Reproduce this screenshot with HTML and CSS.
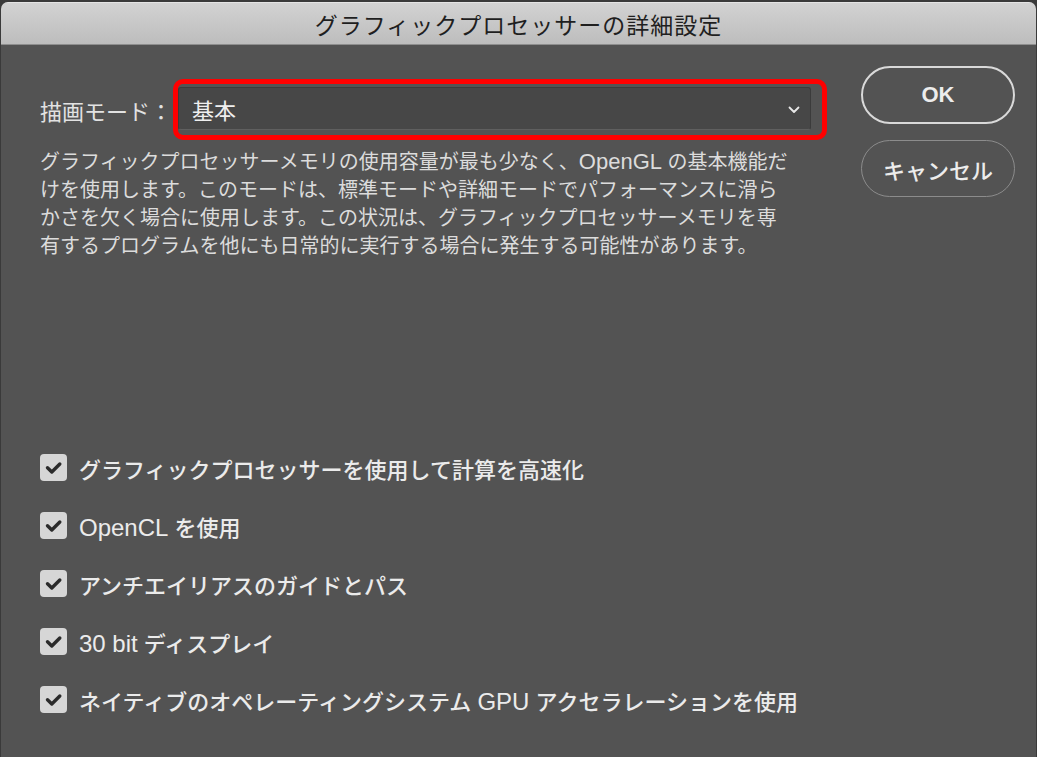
FILE: index.html
```html
<!DOCTYPE html>
<html lang="ja">
<head>
<meta charset="utf-8">
<title>グラフィックプロセッサーの詳細設定</title>
<link rel="stylesheet" href="styles.css">
</head>
<body>
<div class="window">
  <div class="titlebar">グラフィックプロセッサーの詳細設定</div>
  <div class="content">
    <div class="main">
      <div class="mode-row">
        <span class="mode-label">描画モード：</span>
        <div class="highlight">
          <div class="select">
            <span class="select-value">基本</span>
            <svg class="chevron" width="12" height="8" viewBox="0 0 12 8"><path d="M1.5 1.5 L6 6 L10.5 1.5" fill="none" stroke="#e8e8e8" stroke-width="1.8" stroke-linecap="round" stroke-linejoin="round"/></svg>
          </div>
        </div>
      </div>
      <p class="description">グラフィックプロセッサーメモリの使用容量が最も少なく、<span class="latin">OpenGL</span> の基本機能だ<br>けを使用します。このモードは、標準モードや詳細モードでパフォーマンスに滑ら<br>かさを欠く場合に使用します。この状況は、グラフィックプロセッサーメモリを専<br>有するプログラムを他にも日常的に実行する場合に発生する可能性があります。</p>
      <ul class="options">
        <li class="option"><span class="checkbox"><svg viewBox="0 0 27 27" width="27" height="27"><path d="M7.5 13.8 L11.8 18 L19.8 10" fill="none" stroke="#2b2b2b" stroke-width="3.4" stroke-linecap="round" stroke-linejoin="round"/></svg></span><span class="option-label">グラフィックプロセッサーを使用して計算を高速化</span></li>
        <li class="option"><span class="checkbox"><svg viewBox="0 0 27 27" width="27" height="27"><path d="M7.5 13.8 L11.8 18 L19.8 10" fill="none" stroke="#2b2b2b" stroke-width="3.4" stroke-linecap="round" stroke-linejoin="round"/></svg></span><span class="option-label"><span class="latin">OpenCL</span> を使用</span></li>
        <li class="option"><span class="checkbox"><svg viewBox="0 0 27 27" width="27" height="27"><path d="M7.5 13.8 L11.8 18 L19.8 10" fill="none" stroke="#2b2b2b" stroke-width="3.4" stroke-linecap="round" stroke-linejoin="round"/></svg></span><span class="option-label">アンチエイリアスのガイドとパス</span></li>
        <li class="option"><span class="checkbox"><svg viewBox="0 0 27 27" width="27" height="27"><path d="M7.5 13.8 L11.8 18 L19.8 10" fill="none" stroke="#2b2b2b" stroke-width="3.4" stroke-linecap="round" stroke-linejoin="round"/></svg></span><span class="option-label"><span class="latin">30 bit</span> ディスプレイ</span></li>
        <li class="option"><span class="checkbox"><svg viewBox="0 0 27 27" width="27" height="27"><path d="M7.5 13.8 L11.8 18 L19.8 10" fill="none" stroke="#2b2b2b" stroke-width="3.4" stroke-linecap="round" stroke-linejoin="round"/></svg></span><span class="option-label">ネイティブのオペレーティングシステム <span class="latin">GPU</span> アクセラレーションを使用</span></li>
      </ul>
    </div>
    <div class="buttons">
      <button class="btn btn-primary">OK</button>
      <button class="btn btn-secondary">キャンセル</button>
    </div>
  </div>
</div>
</body>
</html>
```
FILE: styles.css
```css
* { box-sizing: border-box; }
html, body { margin: 0; padding: 0; }
body {
  background: #3a3a3a;
  width: 1037px;
  height: 757px;
  overflow: hidden;
  font-family: "Liberation Sans", "Noto Sans CJK JP", sans-serif;
}
.window {
  margin: 2px 1px 0 1px;
  height: 755px;
  background: #535353;
  border-radius: 7px 7px 0 0;
  overflow: hidden;
}
.titlebar {
  height: 43px;
  line-height: 42px;
  text-align: center;
  font-family: "Noto Sans CJK JP", sans-serif;
  font-size: 23px;
  letter-spacing: 1px;
  color: #1f1f1f;
  background: linear-gradient(#d2d2d2, #bdbdbd);
  border-top: 1px solid #e4e4e4;
  border-bottom: 1px solid #8e8e8e;
}
.content {
  display: flex;
  padding: 21px 21px 0 39px;
}
.main {
  flex: 1;
}
.mode-row {
  display: flex;
  align-items: center;
  margin-top: 13px;
}
.mode-label {
  font-size: 22px;
  color: #e2e2e2;
  width: 133px;
  flex: none;
}
.highlight {
  width: 654px;
  border: 5px solid #ff0000;
  border-radius: 10px;
  padding: 3px 11px 5px 0;
}
.select {
  height: 43px;
  display: flex;
  align-items: center;
  justify-content: space-between;
  padding: 0 10px 0 13px;
  background: #474747;
  border: 1px solid #3b3b3b;
  border-bottom-color: #5f5f5f;
  border-radius: 3px;
}
.select-value {
  font-size: 22px;
  color: #efefef;
}
.chevron { display: block; margin-top: 2px; }
.description {
  margin: 8px 0 0 0;
  font-size: 20px;
  line-height: 28px;
  color: #dcdcdc;
  white-space: nowrap;
}
.description .latin {
  font-size: 22px;
  line-height: 20px;
}
.options {
  list-style: none;
  margin: 194px 0 0 0;
  padding: 0;
  display: flex;
  flex-direction: column;
  gap: 31px;
}
.option {
  display: flex;
  align-items: center;
  height: 27px;
}
.checkbox {
  width: 27px;
  height: 27px;
  flex: none;
  background: #d6d6d6;
  border-radius: 4px;
  margin-right: 12px;
}
.checkbox svg { display: block; }
.option-label {
  font-size: 22px;
  font-weight: 500;
  color: #ebebeb;
  white-space: nowrap;
}
.option-label .latin {
  font-size: 24px;
  line-height: 22px;
}
.buttons {
  width: 154px;
  flex: none;
  display: flex;
  flex-direction: column;
  gap: 16px;
}
.btn {
  width: 154px;
  height: 58px;
  border-radius: 29px;
  background: transparent;
  font-family: "Liberation Sans", "Noto Sans CJK JP", sans-serif;
  font-size: 22px;
  color: #ececec;
  padding: 0;
}
.btn-primary {
  border: 2px solid #d9d9d9;
  font-weight: bold;
}
.btn-secondary {
  height: 57px;
  border: 1.5px solid #8c8c8c;
  font-weight: 500;
}
```
